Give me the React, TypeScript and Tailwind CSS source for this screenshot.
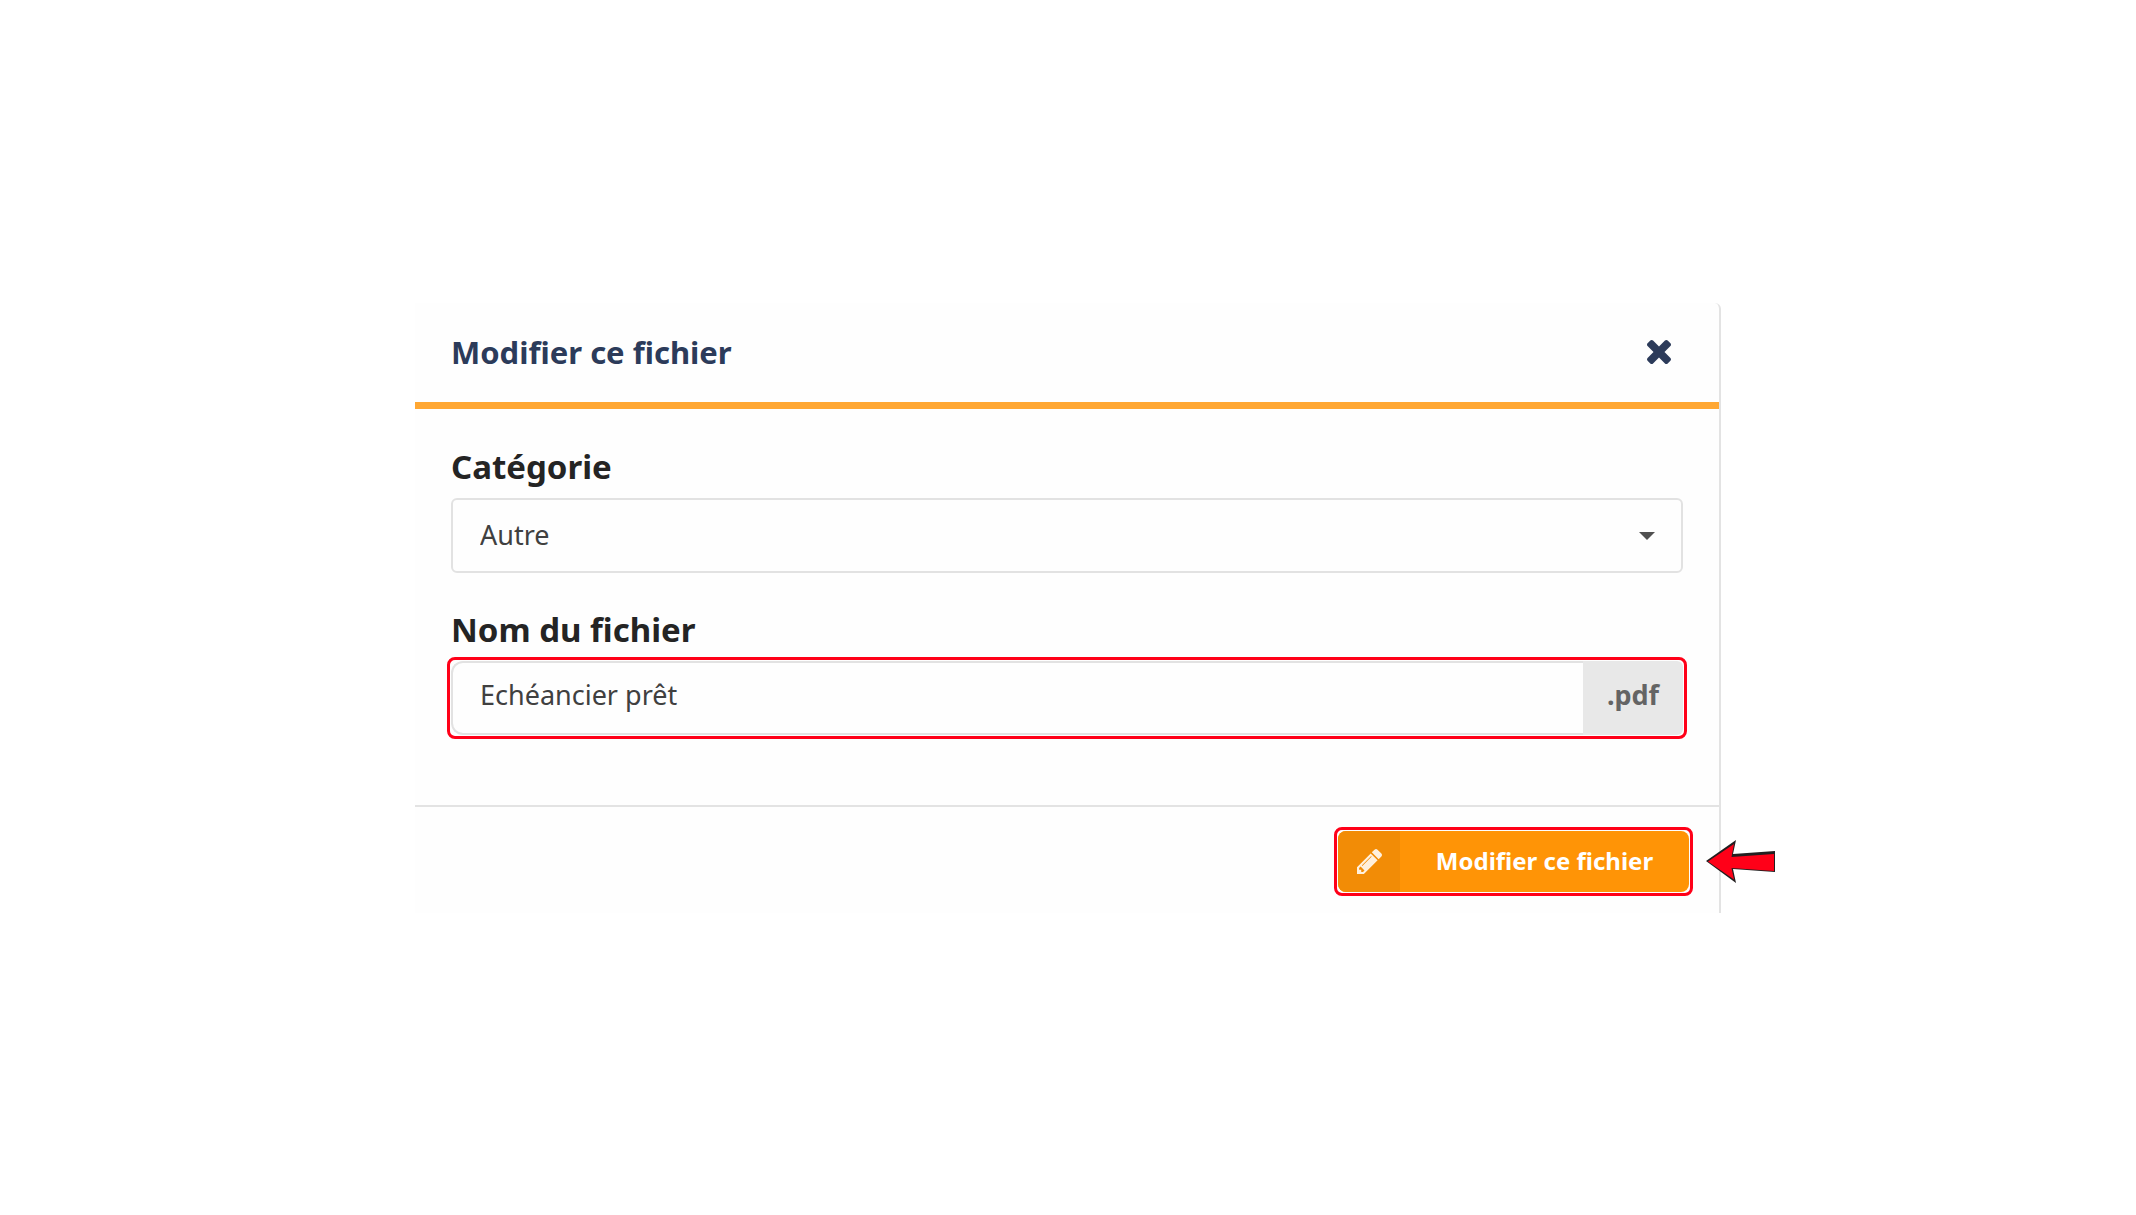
import React, { useState } from 'react';

function CloseIcon() {
    return (
        <svg viewBox="302 366 1188 1188" className="size-6" fill="currentColor" aria-hidden="true">
            <path d="M1490 1322q0 40-28 68l-136 136q-28 28-68 28t-68-28l-294-294-294 294q-28 28-68 28t-68-28l-136-136q-28-28-28-68t28-68l294-294-294-294q-28-28-28-68t28-68l136-136q28-28 68-28t68 28l294 294 294-294q28-28 68-28t68 28l136 136q28 28 28 68t-28 68l-294 294 294 294q28 28 28 68z" />
        </svg>
    );
}

function PencilIcon() {
    return (
        <svg viewBox="128 149 1515 1515" className="size-[25px]" fill="currentColor" aria-hidden="true">
            <path d="M491 1536l91-91-235-235-91 91v107h128v128h107zm523-928q0-22-22-22-10 0-17 7l-542 542q-7 7-7 17 0 22 22 22 10 0 17-7l542-542q7-7 7-17zm-54-192l416 416-832 832h-416v-416zm683 96q0 53-37 90l-166 166-416-416 166-165q36-38 90-38 53 0 91 38l235 234q37 39 37 91z" />
        </svg>
    );
}

// Red frame drawn around the control the user has to look at
function Highlight() {
    return <span className="pointer-events-none absolute -inset-1 rounded-lg border-3 border-[#ff0018]" />;
}

function Arrow() {
    return (
        <svg
            viewBox="0 0 70 44"
            className="pointer-events-none absolute -right-[87px] top-[9px] h-[44px] w-[70px]"
            aria-hidden="true"
        >
            <path d="M0 21 L30 0 L27 14 L69 11 V32 L27 29 L30 43 Z" fill="#231f20" />
            <path d="M2 21.5 L28 4 L25.5 17 L68 14 V31 L25.5 28 L28 39.5 Z" fill="#ff0018" />
        </svg>
    );
}

function App() {
    const [category, setCategory] = useState('autre');
    const [fileName, setFileName] = useState('Echéancier prêt');

    return (
        <main className="flex min-h-screen items-center justify-center bg-white font-['Noto_Sans',sans-serif]">
            <form
                className="w-full max-w-[1306px] rounded-tr-md border-r-2 border-[#e3e3e3] bg-[#fefefe]"
                onSubmit={(e) => e.preventDefault()}
            >
                <header className="flex h-[106px] items-center justify-between border-b-7 border-[#ffa733] pl-9 pr-12">
                    <h1 className="text-[31px] font-bold text-[#2c3b5a]">Modifier ce fichier</h1>
                    <button type="button" aria-label="Fermer" className="text-[#2c3b5a]">
                        <CloseIcon />
                    </button>
                </header>

                <div className="flex flex-col gap-[37px] px-9 pb-[70px] pt-[38px]">
                    <div className="flex flex-col gap-[11px]">
                        <label htmlFor="category" className="text-[33px] font-bold leading-10 text-[#242424]">
                            Catégorie
                        </label>
                        <div className="relative">
                            <select
                                id="category"
                                value={category}
                                onChange={(e) => setCategory(e.target.value)}
                                className="h-[75px] w-full appearance-none rounded-md border-2 border-[#e2e2e2] px-[27px] text-[27px] text-[#404040] outline-none"
                            >
                                <option value="autre">Autre</option>
                            </select>
                            <svg
                                viewBox="0 0 16 8"
                                className="pointer-events-none absolute right-7 top-[34px] h-2 w-4"
                                aria-hidden="true"
                            >
                                <path d="M0 0 H16 L8 8 Z" fill="#505050" />
                            </svg>
                        </div>
                    </div>

                    <div className="flex flex-col gap-[11px]">
                        <label htmlFor="fileName" className="text-[33px] font-bold leading-10 text-[#242424]">
                            Nom du fichier
                        </label>
                        <div className="relative flex h-[74px]">
                            <input
                                id="fileName"
                                type="text"
                                value={fileName}
                                onChange={(e) => setFileName(e.target.value)}
                                className="min-w-0 flex-1 rounded-l-xl border-2 border-r-0 border-[#e2e2e2] px-[27px] pb-1 text-[27px] text-[#404040] outline-none"
                            />
                            <span className="flex w-[100px] items-center justify-center rounded-r-md bg-[#e8e8e8] pb-1 text-[27px] font-bold text-[#646464]">
                                .pdf
                            </span>
                            <Highlight />
                        </div>
                    </div>
                </div>

                <footer className="flex justify-end border-t-2 border-[#e3e3e3] pb-[21px] pl-9 pr-[30px] pt-6">
                    <div className="relative">
                        <button
                            type="submit"
                            className="flex h-[61px] w-[351px] overflow-hidden rounded-lg bg-[#ff9406] text-[24px] font-bold text-white"
                        >
                            <span className="flex w-[62px] items-center justify-center self-stretch bg-[#f28c06] text-[#fff0dd]">
                                <PencilIcon />
                            </span>
                            <span className="flex-1 self-center">Modifier ce fichier</span>
                        </button>
                        <Highlight />
                        <Arrow />
                    </div>
                </footer>
            </form>
        </main>
    );
}

export default App;
